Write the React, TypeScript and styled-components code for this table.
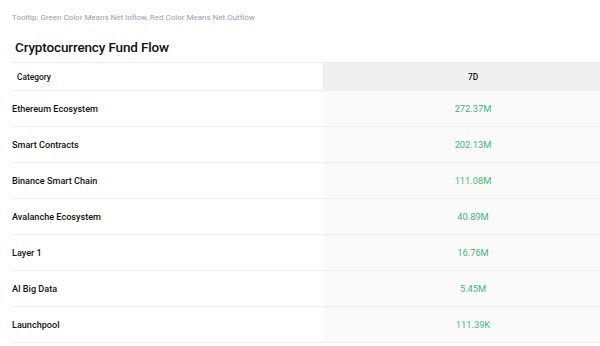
import { Fragment } from "react";
import styled, { createGlobalStyle } from "styled-components";

const GlobalStyle = createGlobalStyle`
  html, body {
    margin: 0;
    padding: 0;
    background: #ffffff;
    overflow: hidden;
  }
  body {
    font-family: Roboto, Inter, "Noto Sans", sans-serif;
    color: #111;
  }
`;

const Page = styled.div`
  width: 600px;
  height: 346px;
  overflow: hidden;
  padding: 12px 0 0 12px;
  box-sizing: border-box;
`;

const Tooltip = styled.p`
  margin: 0;
  font-size: 8px;
  line-height: 12px;
  color: #9aa0ad;
`;

const Title = styled.h2`
  margin: 14px 0 0 3px;
  font-size: 13.5px;
  line-height: 18px;
  font-weight: 500;
  letter-spacing: -0.15px;
  color: #111;
`;

const Table = styled.div`
  margin-top: 6px;
  width: 611px;
  display: grid;
  grid-template-columns: 311px 300px;
  border-top: 1px solid #ededed;
`;

const Cell = styled.div<{ $head?: boolean; $value?: boolean }>`
  height: ${({ $head }) => ($head ? "27px" : "35px")};
  display: flex;
  align-items: center;
  justify-content: ${({ $value }) => ($value ? "center" : "flex-start")};
  padding-left: ${({ $head, $value }) => ($value ? "0" : $head ? "5px" : "0")};
  border-bottom: 1px solid #eeeeee;
  background: ${({ $head, $value }) =>
    $value ? ($head ? "#efefef" : "#fafafa") : "#ffffff"};
  font-size: ${({ $head }) => ($head ? "8.4px" : "9.1px")};
  font-weight: 500;
  color: #111;
`;

const Amount = styled.span`
  color: #3dba7a;
  font-size: 9.3px;
  font-weight: 400;
`;

const rows = [
  { name: "Ethereum Ecosystem", value: "272.37M" },
  { name: "Smart Contracts", value: "202.13M" },
  { name: "Binance Smart Chain", value: "111.08M" },
  { name: "Avalanche Ecosystem", value: "40.89M" },
  { name: "Layer 1", value: "16.76M" },
  { name: "AI Big Data", value: "5.45M" },
  { name: "Launchpool", value: "111.39K" },
];

export default function App() {
  return (
    <>
      <GlobalStyle />
      <Page>
        <Tooltip>
          Tooltip: Green Color Means Net Inflow, Red Color Means Net Outflow
        </Tooltip>
        <Title>Cryptocurrency Fund Flow</Title>
        <Table>
          <Cell $head>Category</Cell>
          <Cell $head $value>
            7D
          </Cell>
          {rows.map((r) => (
            <Fragment key={r.name}>
              <Cell>{r.name}</Cell>
              <Cell $value>
                <Amount>{r.value}</Amount>
              </Cell>
            </Fragment>
          ))}
        </Table>
      </Page>
    </>
  );
}
